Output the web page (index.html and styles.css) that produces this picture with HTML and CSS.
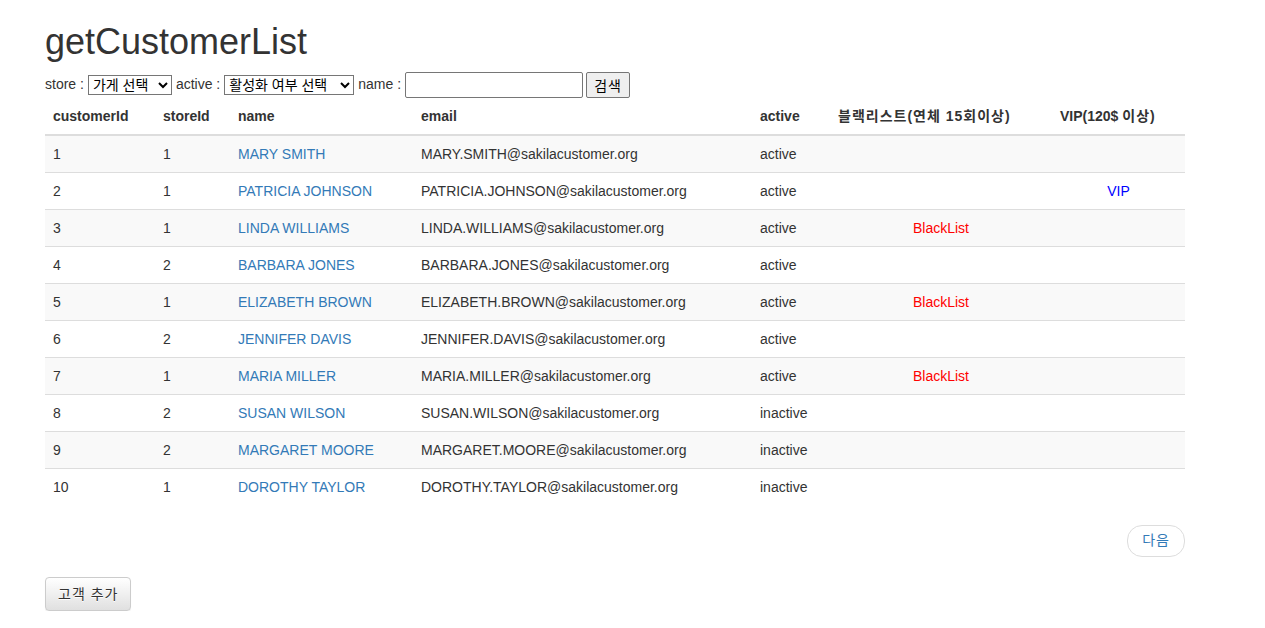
FILE: index.html
```html
<!DOCTYPE html>
<html lang="ko">
<head>
<meta charset="utf-8">
<title>getCustomerList</title>
<link rel="stylesheet" href="styles.css">
</head>
<body>
<div class="container">
  <h1 class="title">getCustomerList</h1>
  <form class="search">
    <label>store :</label>
    <select class="sel sel-store"><option>가게 선택</option></select>
    <label>active :</label>
    <select class="sel sel-active"><option>활성화 여부 선택</option></select>
    <label>name :</label>
    <input class="name-input" type="text">
    <button class="search-btn" type="button">검색</button>
  </form>
  <table class="table">
    <colgroup>
      <col class="c1"><col class="c2"><col class="c3"><col class="c4"><col class="c5"><col class="c6"><col class="c7">
    </colgroup>
    <thead>
      <tr>
        <th>customerId</th><th>storeId</th><th>name</th><th>email</th><th>active</th><th class="ko">블랙리스트(연체 15회이상)</th><th>VIP(120$ <span class="ko">이상</span>)</th>
      </tr>
    </thead>
    <tbody>
      <tr><td>1</td><td>1</td><td><a href="#">MARY SMITH</a></td><td>MARY.SMITH@sakilacustomer.org</td><td>active</td><td></td><td></td></tr>
      <tr><td>2</td><td>1</td><td><a href="#">PATRICIA JOHNSON</a></td><td>PATRICIA.JOHNSON@sakilacustomer.org</td><td>active</td><td></td><td class="ctr vip">VIP</td></tr>
      <tr><td>3</td><td>1</td><td><a href="#">LINDA WILLIAMS</a></td><td>LINDA.WILLIAMS@sakilacustomer.org</td><td>active</td><td class="ctr black">BlackList</td><td></td></tr>
      <tr><td>4</td><td>2</td><td><a href="#">BARBARA JONES</a></td><td>BARBARA.JONES@sakilacustomer.org</td><td>active</td><td></td><td></td></tr>
      <tr><td>5</td><td>1</td><td><a href="#">ELIZABETH BROWN</a></td><td>ELIZABETH.BROWN@sakilacustomer.org</td><td>active</td><td class="ctr black">BlackList</td><td></td></tr>
      <tr><td>6</td><td>2</td><td><a href="#">JENNIFER DAVIS</a></td><td>JENNIFER.DAVIS@sakilacustomer.org</td><td>active</td><td></td><td></td></tr>
      <tr><td>7</td><td>1</td><td><a href="#">MARIA MILLER</a></td><td>MARIA.MILLER@sakilacustomer.org</td><td>active</td><td class="ctr black">BlackList</td><td></td></tr>
      <tr><td>8</td><td>2</td><td><a href="#">SUSAN WILSON</a></td><td>SUSAN.WILSON@sakilacustomer.org</td><td>inactive</td><td></td><td></td></tr>
      <tr><td>9</td><td>2</td><td><a href="#">MARGARET MOORE</a></td><td>MARGARET.MOORE@sakilacustomer.org</td><td>inactive</td><td></td><td></td></tr>
      <tr><td>10</td><td>1</td><td><a href="#">DOROTHY TAYLOR</a></td><td>DOROTHY.TAYLOR@sakilacustomer.org</td><td>inactive</td><td></td><td></td></tr>
    </tbody>
  </table>
  <ul class="pager">
    <li><a class="ko" href="#">다음</a></li>
  </ul>
  <div>
    <a class="btn-default ko" href="#">고객 추가</a>
  </div>
</div>
</body>
</html>
```
FILE: styles.css
```css
html, body {
  margin: 0;
  padding: 0;
  background: #fff;
}
body {
  font-family: "Liberation Sans", "Noto Sans CJK KR", sans-serif;
  font-size: 14px;
  line-height: 1.42857;
  color: #333;
}
a {
  color: #337ab7;
  text-decoration: none;
}
.ko {
  letter-spacing: 1px;
}
.container {
  width: 1140px;
  margin-left: 45px;
}
.title {
  font-size: 36px;
  font-weight: 500;
  line-height: 1.1;
  margin: 22px 0 10px;
}
.search {
  display: flex;
  align-items: center;
  height: 26px;
  margin-top: 0;
}
.search label {
  margin-right: 4px;
}
.sel {
  font-family: "Liberation Sans", "Noto Sans CJK KR", sans-serif;
  font-size: 14px;
  height: 20px;
  padding: 0;
  border: 1px solid #767676;
  border-radius: 0;
  background: #fff;
  color: #000;
  margin-right: 4px;
}
.sel-store { width: 84px; }
.sel-active { width: 130px; }
.name-input {
  width: 178px;
  height: 26px;
  box-sizing: border-box;
  border: 1px solid #767676;
  border-radius: 2px;
  padding: 1px 2px;
  margin: 0 3px 0 0;
}
.search-btn {
  font-family: "Liberation Sans", "Noto Sans CJK KR", sans-serif;
  font-size: 14px;
  letter-spacing: 1px;
  width: 44px;
  height: 26px;
  box-sizing: border-box;
  border: 1px solid #767676;
  border-radius: 2px;
  background: #efefef;
  color: #000;
  padding: 0;
}
.table {
  width: 1140px;
  table-layout: fixed;
  border-collapse: collapse;
  border-spacing: 0;
  margin: 0 0 20px;
}
.c1 { width: 110px; }
.c2 { width: 75px; }
.c3 { width: 183px; }
.c4 { width: 339px; }
.c5 { width: 78px; }
.c6 { width: 222px; }
.c7 { width: 133px; }
.table th,
.table td {
  padding: 8px;
  line-height: 20px;
  text-align: left;
  vertical-align: top;
  border-top: 1px solid #ddd;
  white-space: nowrap;
}
.table thead th {
  border-top: 0;
  border-bottom: 2px solid #ddd;
  vertical-align: bottom;
  font-weight: bold;
}
.table tbody tr:first-child td {
  border-top: 0;
}
.table tbody tr:nth-child(odd) {
  background: #f9f9f9;
}
.table td.ctr {
  text-align: center;
}
.black { color: #ff0000; }
.vip { color: #0000ff; }
.pager {
  list-style: none;
  margin: 20px 0;
  padding: 0;
  display: flex;
  justify-content: flex-end;
}
.pager a {
  display: inline-block;
  padding: 5px 14px;
  background: #fff;
  border: 1px solid #ddd;
  border-radius: 15px;
}
.btn-default {
  display: inline-block;
  padding: 6px 12px;
  font-size: 14px;
  line-height: 20px;
  color: #333;
  border: 1px solid #ccc;
  border-radius: 4px;
  background-image: linear-gradient(to bottom, #fff 0, #e0e0e0 100%);
  text-shadow: 0 1px 0 #fff;
  box-shadow: inset 0 1px 0 rgba(255,255,255,.15), 0 1px 1px rgba(0,0,0,.075);
}
```
